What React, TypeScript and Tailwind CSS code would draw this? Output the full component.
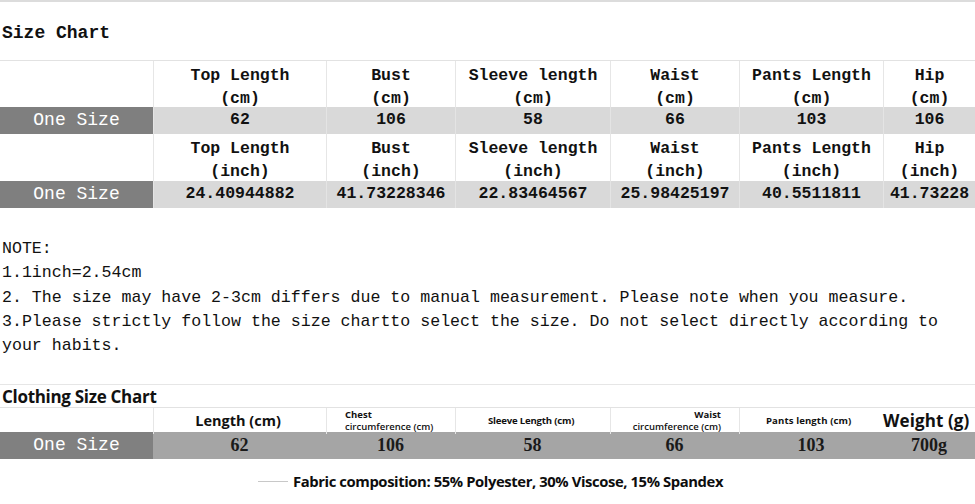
import React from 'react'

const COLS = 'grid grid-cols-[153px_173px_129px_155px_129px_144px_92px]'
const MONO = "font-['Liberation_Mono',monospace]"

const HEADERS = ['Top Length', 'Bust', 'Sleeve length', 'Waist', 'Pants Length', 'Hip']
const CM = ['62', '106', '58', '66', '103', '106']
const INCH = ['24.40944882', '41.73228346', '22.83464567', '25.98425197', '40.5511811', '41.73228']

function HeaderRow({ unit, top }: { unit: string; top?: boolean }) {
  return (
    <div className={`${COLS} h-[47px] ${top ? 'border-t border-[#e2e2e2]' : ''}`}>
      <div />
      {HEADERS.map((h) => (
        <div
          key={h}
          className={`flex flex-col items-center justify-center pt-[3px] border-l border-[#e6e6e6] font-bold text-[16.5px] leading-[23px] text-[#111] ${MONO}`}
        >
          <span className="whitespace-pre">{h}</span>
          <span>{unit}</span>
        </div>
      ))}
    </div>
  )
}

function DataRow({ values }: { values: string[] }) {
  return (
    <div className={`${COLS} h-[27px] bg-[#d9d9d9]`}>
      <div className={`flex items-center justify-center bg-[#7f7f7f] text-white text-[18px] ${MONO}`}>
        One Size
      </div>
      {values.map((v, i) => (
        <div
          key={i}
          className={`flex items-center justify-center border-l border-[#e4e4e4] font-bold text-[16.5px] text-[#111] whitespace-nowrap ${MONO}`}
        >
          {v}
        </div>
      ))}
    </div>
  )
}

const NOTES = [
  'NOTE:',
  '1.1inch=2.54cm',
  '2. The size may have 2-3cm differs due to manual measurement. Please note when you measure.',
  '3.Please strictly follow the size chartto select the size. Do not select directly according to',
  'your habits.',
]

export default function App() {
  return (
    <div className="w-[975px] h-[504px] bg-white overflow-hidden text-[#111]">
      <div className="border-t-2 border-[#dcdcdc]" />
      <div className={`h-[58px] flex items-center pl-[2px] pt-[5px] text-[18px] font-bold ${MONO}`}>
        Size Chart
      </div>

      <HeaderRow unit="(cm)" top />
      <DataRow values={CM} />
      <HeaderRow unit="(inch)" />
      <DataRow values={INCH} />

      <div className={`mt-[29px] pl-[2px] text-[16.6px] leading-[24.3px] whitespace-pre ${MONO}`}>
        {NOTES.map((n) => (
          <div key={n}>{n}</div>
        ))}
      </div>

      <div className="mt-[26px] border-t border-[#e6e6e6]" />
      <div className="h-[23px] flex items-center pl-[2px] font-['Open_Sans',sans-serif] font-bold text-[17px] tracking-[-0.3px] border-b border-[#e2e2e2]">
        Clothing Size Chart
      </div>

      <div className={`${COLS} h-[24px] font-['Open_Sans',sans-serif] font-bold`}>
        <div />
        <div className="flex items-center justify-center border-l border-[#e6e6e6] text-[14.5px] pr-[4px]">
          Length (cm)
        </div>
        <div className="flex flex-col justify-center border-l border-[#e6e6e6] pl-[18px] text-[9.5px] leading-[12px]">
          <span>Chest</span>
          <span className="font-semibold">circumference (cm)</span>
        </div>
        <div className="flex items-center border-l border-[#e6e6e6] pl-[32px] text-[9.6px] tracking-[-0.2px]">
          Sleeve Length (cm)
        </div>
        <div className="flex flex-col justify-center items-end border-l border-[#e6e6e6] pr-[18px] text-[9.5px] leading-[12px]">
          <span>Waist</span>
          <span className="font-semibold">circumference (cm)</span>
        </div>
        <div className="flex items-center border-l border-[#e6e6e6] pl-[26px] text-[9.6px] tracking-[0.1px]">
          Pants length (cm)
        </div>
        <div className="flex items-center text-[17px] tracking-[0.1px] whitespace-nowrap">
          Weight (g)
        </div>
      </div>

      <div className={`${COLS} h-[27px] bg-[#a5a5a5]`}>
        <div className={`flex items-center justify-center bg-[#808080] text-white text-[18px] ${MONO}`}>
          One Size
        </div>
        {['62', '106', '58', '66', '103', '700g'].map((v, i) => (
          <div
            key={i}
            className="flex items-center justify-center font-['Liberation_Serif',serif] font-bold text-[18px] text-[#1a1a1a]"
          >
            {v}
          </div>
        ))}
      </div>

      <div className="mt-[11px] h-[22px] flex items-center">
        <div className="ml-[258px] w-[30px] h-px bg-[#c8c8c8]" />
        <div className="ml-[5px] font-['Open_Sans',sans-serif] font-bold text-[14.8px] tracking-[-0.4px] text-[#0d0d0d] whitespace-nowrap">
          Fabric composition: 55% Polyester, 30% Viscose, 15% Spandex
        </div>
      </div>
    </div>
  )
}
